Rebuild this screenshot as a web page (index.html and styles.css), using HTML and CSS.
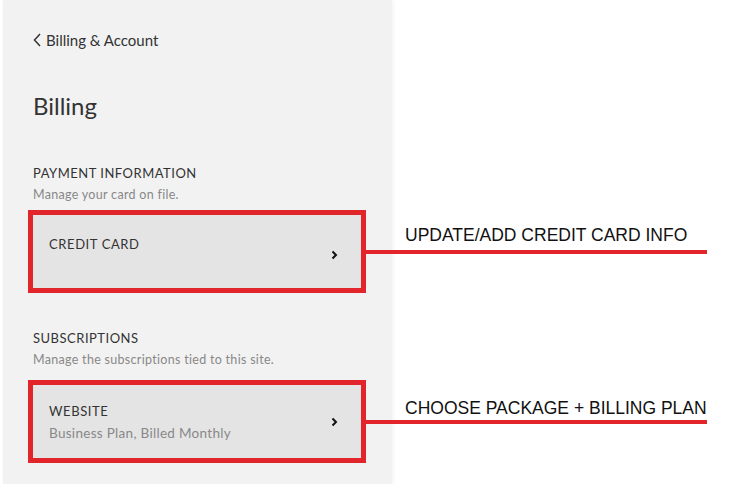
FILE: index.html
```html
<!DOCTYPE html>
<html lang="en">
<head>
    <meta charset="UTF-8">
    <title>Billing</title>
    <link rel="stylesheet" href="styles.css">
</head>
<body>
    <div class="panel">
        <a class="back-link" href="#">
            <svg class="back-icon" width="8" height="14" viewBox="0 0 8 14"><path d="M7 1 L1.5 7 L7 13" fill="none" stroke="#333" stroke-width="1.5"/></svg>
            Billing &amp; Account
        </a>

        <h1 class="page-title">Billing</h1>

        <div class="section">
            <h2 class="section-title">PAYMENT INFORMATION</h2>
            <p class="section-desc">Manage your card on file.</p>
            <div class="card card-single">
                <div class="card-text">
                    <div class="card-title">CREDIT CARD</div>
                </div>
                <svg class="chev" width="7" height="10" viewBox="0 0 7 10"><path d="M1.5 1.5 L5 5 L1.5 8.5" fill="none" stroke="#111" stroke-width="2"/></svg>
                <div class="callout">
                    <span class="callout-label">UPDATE/ADD CREDIT CARD INFO</span>
                </div>
            </div>
        </div>

        <div class="section">
            <h2 class="section-title">SUBSCRIPTIONS</h2>
            <p class="section-desc">Manage the subscriptions tied to this site.</p>
            <div class="card">
                <div class="card-text">
                    <div class="card-title">WEBSITE</div>
                    <div class="card-sub">Business Plan, Billed Monthly</div>
                </div>
                <svg class="chev" width="7" height="10" viewBox="0 0 7 10"><path d="M1.5 1.5 L5 5 L1.5 8.5" fill="none" stroke="#111" stroke-width="2"/></svg>
                <div class="callout">
                    <span class="callout-label callout-label-low">CHOOSE PACKAGE + BILLING PLAN</span>
                </div>
            </div>
        </div>
    </div>
</body>
</html>
```

FILE: styles.css
```css
body {
    margin: 0;
    padding: 0;
    width: 731px;
    height: 484px;
    overflow: hidden;
    background-color: #ffffff;
    font-family: "Lato", "Liberation Sans", sans-serif;
    color: #333;
}

.panel {
    box-sizing: border-box;
    width: 389px;
    height: 484px;
    margin-left: 3px;
    padding: 30px 0 0 30px;
    background-color: #f2f2f2;
    box-shadow: 1px 0 4px rgba(0, 0, 0, 0.06);
}

.back-link {
    display: flex;
    align-items: center;
    gap: 5px;
    height: 20px;
    color: #333;
    font-size: 15px;
    text-decoration: none;
}

.page-title {
    margin: 41px 0 0 0;
    font-size: 24px;
    font-weight: 400;
    line-height: 30px;
}

.section {
    margin-top: 44px;
}

.section + .section {
    margin-top: 37px;
}

.section-title {
    margin: 0;
    font-size: 13px;
    font-weight: 400;
    letter-spacing: 0.5px;
    line-height: 16px;
    color: #333;
}

.section-desc {
    margin: 6px 0 0 0;
    font-size: 12.5px;
    line-height: 16px;
    color: #888;
    letter-spacing: 0.3px;
}

.card {
    position: relative;
    display: flex;
    align-items: center;
    box-sizing: border-box;
    width: 338px;
    height: 83px;
    margin: 12px 0 0 -5px;
    padding: 16px 23px 16px 16px;
    border: 5px solid #e2242b;
    background-color: #e4e4e4;
}

.card-text {
    flex: 1;
}

.card-single {
    align-items: flex-start;
    margin-top: 7px;
    padding-top: 21px;
}

.card-single .chev {
    margin-top: 14px;
}

.card-title {
    font-size: 13px;
    line-height: 16px;
    letter-spacing: 0.6px;
    color: #333;
}

.card-sub {
    margin-top: 6px;
    font-size: 13.5px;
    line-height: 16px;
    color: #888;
    letter-spacing: 0.3px;
}

/* annotation overlay */
.callout {
    position: absolute;
    left: calc(100% + 5px);
    top: 50%;
    width: 341px;
    height: 4px;
    margin-top: -2px;
    background-color: #e2242b;
}

.callout-label {
    position: absolute;
    left: 39px;
    bottom: 9px;
    font-family: "Liberation Sans", sans-serif;
    font-size: 17.5px;
    line-height: 20px;
    color: #111;
    white-space: nowrap;
}

.callout-label-low {
    bottom: 6px;
}
```
